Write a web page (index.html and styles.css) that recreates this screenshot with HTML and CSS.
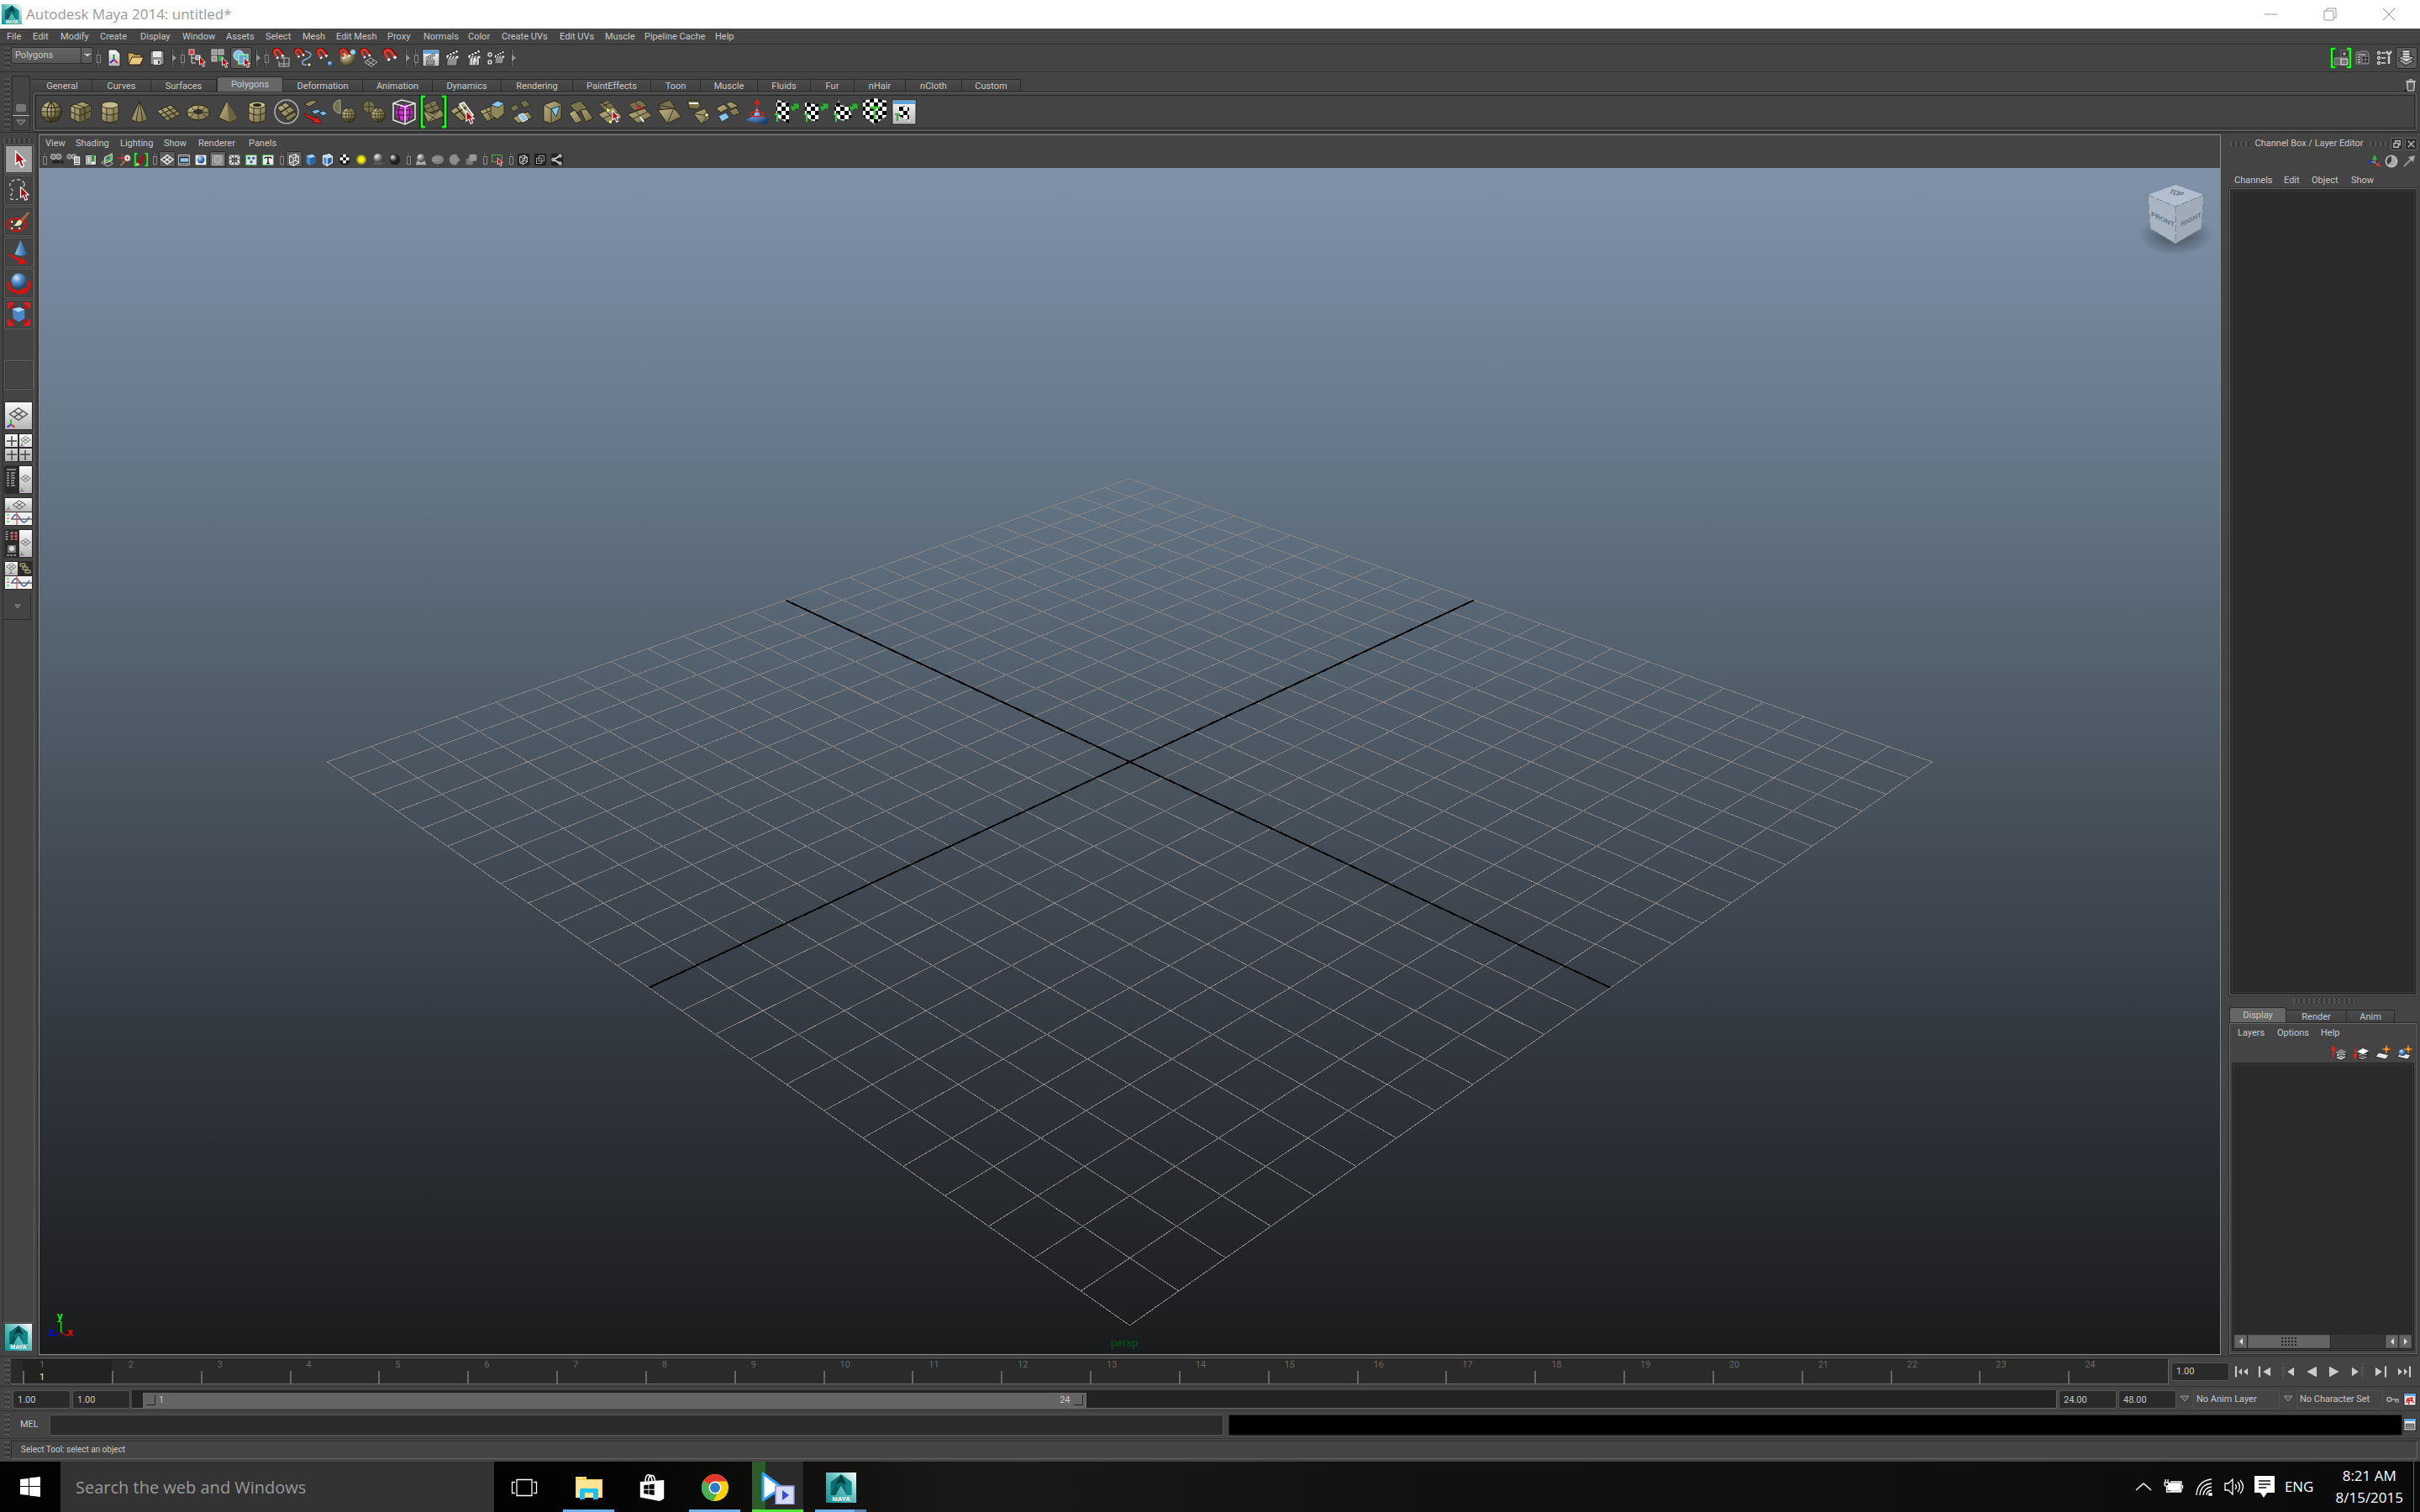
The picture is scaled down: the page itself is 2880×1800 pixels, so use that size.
FILE: index.html
```html
<!DOCTYPE html>
<html lang="en">
<head>
<meta charset="utf-8">
<title>Autodesk Maya 2014: untitled*</title>
<link rel="stylesheet" href="styles.css">
</head>
<body>
<svg class="defs" aria-hidden="true">
  <defs>
    <linearGradient id="tan" x1="0" y1="0" x2="1" y2="1"><stop offset="0" stop-color="#c2b78a"/><stop offset="1" stop-color="#6d6542"/></linearGradient>
    <radialGradient id="tanball" cx=".35" cy=".3" r=".75"><stop offset="0" stop-color="#d6cca0"/><stop offset=".5" stop-color="#8f865c"/><stop offset="1" stop-color="#2f2b18"/></radialGradient>
    <radialGradient id="blueball" cx=".35" cy=".3" r=".75"><stop offset="0" stop-color="#d8ecff"/><stop offset=".4" stop-color="#5b94d0"/><stop offset="1" stop-color="#173a66"/></radialGradient>
    <radialGradient id="greyball" cx=".35" cy=".3" r=".75"><stop offset="0" stop-color="#ececec"/><stop offset=".5" stop-color="#8a8a8a"/><stop offset="1" stop-color="#3a3a3a"/></radialGradient>
    <linearGradient id="cone" x1="0" x2="1" y1="0" y2="0"><stop offset="0" stop-color="#8cc4ee"/><stop offset="1" stop-color="#1d5490"/></linearGradient>
    <linearGradient id="grey" x1="0" y1="0" x2="0" y2="1"><stop offset="0" stop-color="#fafafa"/><stop offset="1" stop-color="#b4b4b4"/></linearGradient>
    <linearGradient id="mayabg" x1="0" y1="1" x2="1" y2="0"><stop offset="0" stop-color="#0f8f90"/><stop offset=".5" stop-color="#5cbcbb"/><stop offset="1" stop-color="#ffffff"/></linearGradient>
    <radialGradient id="glow"><stop offset="0" stop-color="#ffff20"/><stop offset=".5" stop-color="#e6e010"/><stop offset="1" stop-color="#e6e010" stop-opacity="0"/></radialGradient>
    <radialGradient id="shade"><stop offset="0" stop-color="#2a343e" stop-opacity=".7"/><stop offset="1" stop-color="#2a343e" stop-opacity="0"/></radialGradient>
    <pattern id="chk" width="10" height="10" patternUnits="userSpaceOnUse"><rect width="10" height="10" fill="#fff"/><rect width="5" height="5" fill="#000"/><rect x="5" y="5" width="5" height="5" fill="#000"/></pattern>
  </defs>

  <symbol id="maya" viewBox="0 0 32 32" overflow="visible"><rect width="32" height="32" fill="url(#mayabg)"/><path d="M16 2 27 10V24L22 24 16 14 10 24 5 24V10Z" fill="#0b6f70"/><path d="M16 2 20 13 22 24 27 24V10Z" fill="#118788"/><path d="M16 2 10 13 16 10 22 13Z" fill="#033a3d"/><path d="M10 13 5 24H10L13 18Z" fill="#0a5658"/><text x="16" y="30" text-anchor="middle" class="maya-word">MAYA</text></symbol>
  <symbol id="cur" viewBox="0 0 16 22"><path d="M2 1V17L6 14 9 21 12 19.500 9.500 13H14Z" fill="#b3060c" stroke="#fff" stroke-width="1.500"/></symbol>
  <symbol id="axes" viewBox="0 0 16 16"><path d="M8 10V2" stroke="#1db82a" stroke-width="2.500"/><path d="M8 10 2 14" stroke="#2038e0" stroke-width="2.500"/><path d="M8 10 14 14" stroke="#e02424" stroke-width="2.500"/></symbol>
  <symbol id="mesh" viewBox="0 0 32 24"><path d="M16 3 29 12 16 21 3 12ZM9.500 7.500 22.500 16.500M22.500 7.500 9.500 16.500" fill="none" stroke="#4a4a4a" stroke-width="1.600"/></symbol>

  <symbol id="i-new" viewBox="0 0 24 24"><path d="M6 2H15L20 7V22H6Z" fill="url(#grey)" stroke="#222"/><path d="M12.500 14V8" stroke="#1a9a22" stroke-width="2"/><path d="M12.500 14 8 18" stroke="#2038e0" stroke-width="2"/><path d="M12.500 14 17 18" stroke="#e02424" stroke-width="2"/></symbol>
  <symbol id="i-open" viewBox="0 0 24 24"><path d="M3 6H9L11 8H19V20H4Z" fill="#c9a65a" stroke="#2c2412"/><path d="M4 20 8 11H22L18 20Z" fill="#e9c982" stroke="#2c2412"/></symbol>
  <symbol id="i-save" viewBox="0 0 24 24"><path d="M4 4H19L20 5V20H4Z" fill="#8d8d8d" stroke="#222"/><rect x="7" y="4" width="10" height="7" fill="#e8e8e8"/><rect x="8" y="14" width="8" height="6" fill="#ddd"/><rect x="13" y="15" width="2" height="4" fill="#444"/></symbol>
  <symbol id="i-hier" viewBox="0 0 24 24"><rect x="2" y="2" width="6" height="6" fill="#d63a3a" stroke="#f2c0c0"/><path d="M5 8V18H10M5 12H10" stroke="#ddd" fill="none"/><rect x="10" y="9" width="5" height="5" fill="#999" stroke="#ddd"/><use href="#cur" x="13" y="10" width="10" height="13"/></symbol>
  <symbol id="i-comp" viewBox="0 0 24 24"><g fill="#999" stroke="#ddd" stroke-width=".8"><rect x="3" y="2" width="6" height="6"/><rect x="11" y="2" width="6" height="6"/><rect x="3" y="10" width="6" height="6"/></g><rect x="11" y="10" width="6" height="6" fill="#3fae4a"/><use href="#cur" x="14" y="11" width="10" height="13"/></symbol>
  <symbol id="i-obj" viewBox="0 0 24 24"><circle cx="9" cy="9" r="6" fill="#7fc2ee" stroke="#d8eeff"/><rect x="9" y="8" width="11" height="11" fill="#5fa8d8" stroke="#8ff0a0" stroke-width="1.500"/><use href="#cur" x="14" y="11" width="10" height="13"/></symbol>
  <symbol id="mag" viewBox="0 0 24 24"><path d="M4 8C2 2 8 0 12 4L17 11" fill="none" stroke="#6e1512" stroke-width="5.500"/><path d="M4.500 8C3 3 8 1 11.500 5L15 10" fill="none" stroke="#d8392c" stroke-width="3.500"/><path d="M5 8 8 13" stroke="#d8392c" stroke-width="3.500"/><path d="M8 13 9.500 15M15 10 17 12.500" stroke="#f2f2f2" stroke-width="3.500"/></symbol>
  <symbol id="i-mgrid" viewBox="0 0 24 24"><path d="M11 12H21V22H9V16M9 19H21M15 11V22" stroke="#bbb" fill="none"/><use href="#mag" width="20" height="20"/></symbol>
  <symbol id="i-mcurve" viewBox="0 0 24 24"><path d="M14 4C26 6 20 12 14 14 8 16 10 22 19 20" stroke="#7fb2e0" fill="none" stroke-width="1.500"/><use href="#mag" width="18" height="18"/><rect x="17" y="18" width="4" height="4" fill="#ffffb0" stroke="#222"/></symbol>
  <symbol id="i-mpoint" viewBox="0 0 24 24"><use href="#mag" width="20" height="20"/><circle cx="18" cy="19" r="3" fill="url(#blueball)"/></symbol>
  <symbol id="i-mproj" viewBox="0 0 24 24"><circle cx="13" cy="13" r="9" fill="url(#tanball)"/><use href="#mag" x="1" width="20" height="20"/><circle cx="19" cy="5" r="3" fill="#8fd0f8"/></symbol>
  <symbol id="i-mplane" viewBox="0 0 24 24"><path d="M14 12 22 17 15 22 7 17ZM10 15 18 20M18 15 11 20" stroke="#bbb" fill="none"/><use href="#mag" width="19" height="19"/></symbol>
  <symbol id="i-mlive" viewBox="0 0 24 24"><use href="#mag" x="1" width="24" height="24"/></symbol>
  <symbol id="clap" viewBox="0 0 24 24"><path d="M5 11H19L18 23H4Z" fill="#8f8f8f" stroke="#222"/><path d="M3 9 19 1 20 5 4 12Z" fill="#f0f0f0" stroke="#222"/><path d="M4 10H20V13H4Z" fill="#e4e4e4"/><path d="M6 7 9 10M10 5 13 8M14 3 17 6M8 10 6 13M12 10 10 13M16 10 14 13" stroke="#222" stroke-width="1.500"/></symbol>
  <symbol id="i-rwin" viewBox="0 0 24 24"><rect x="2" y="2" width="20" height="20" fill="url(#grey)" stroke="#222"/><rect x="3" y="3" width="18" height="4" fill="#5fa3df"/><use href="#clap" x="4" y="6" width="15" height="15"/></symbol>
  <symbol id="i-rend" viewBox="0 0 24 24"><use href="#clap" x="1" y="1" width="21" height="21"/></symbol>
  <symbol id="i-ipr" viewBox="0 0 24 24"><use href="#clap" x="1" y="1" width="21" height="21"/><path d="M8 13V20M11 20V13H13V16H11M16 20V13" stroke="#fff" fill="none" stroke-width="1.200"/></symbol>
  <symbol id="i-rset" viewBox="0 0 24 24"><use href="#clap" x="7" y="1" width="17" height="20"/><g fill="none" stroke="#ddd" stroke-width="1.500"><circle cx="4" cy="8" r="2"/><circle cx="4" cy="17" r="2"/></g></symbol>

  <symbol id="s-sphere" viewBox="0 0 32 32"><circle cx="16" cy="16" r="12.500" fill="url(#tanball)" stroke="#2b2714"/><path d="M4 16H28M6 10Q16 13 26 10M6 22Q16 25 26 22M16 4V28M16 4Q6 16 16 28M16 4Q26 16 16 28" fill="none" stroke="#332f1b" stroke-width="1.200"/></symbol>
  <symbol id="s-cube" viewBox="0 0 32 32"><path d="M4 9 18 4 28 8V22L15 29 4 24Z" fill="url(#tan)" stroke="#2b2714"/><path d="M15 13 28 8V22L15 29Z" fill="#6b6340"/><path d="M4 9 15 13 28 8M15 13V29M4 16 15 21 28 15M9 11V26M21 11V25M10 7 21 11" fill="none" stroke="#332f1b"/></symbol>
  <symbol id="s-cyl" viewBox="0 0 32 32"><path d="M6 8V25C8 30 24 30 26 25V8Z" fill="url(#tan)" stroke="#2b2714"/><ellipse cx="16" cy="8" rx="10" ry="4" fill="#c5bb90" stroke="#2b2714"/><path d="M6 17Q16 23 26 17M12 12V29M20 12V29" fill="none" stroke="#332f1b"/></symbol>
  <symbol id="s-cone" viewBox="0 0 32 32"><path d="M16 3 26 25Q16 32 6 25Z" fill="url(#tan)" stroke="#2b2714"/><path d="M16 3 12 28M16 3 20 28" stroke="#332f1b" fill="none"/></symbol>
  <symbol id="s-plane" viewBox="0 0 32 32"><path d="M2 15 18 8 30 19 14 27Z" fill="url(#tan)" stroke="#2b2714"/><path d="M6 19 22 12M10 23 26 15.500M7 13 19 25M13 10 25 21.500" stroke="#332f1b" stroke-width="1.200"/></symbol>
  <symbol id="s-torus" viewBox="0 0 32 32"><ellipse cx="16" cy="17" rx="13.500" ry="9" fill="url(#tan)" stroke="#2b2714"/><ellipse cx="16" cy="16" rx="5.500" ry="2.500" fill="#333" stroke="#2b2714"/><path d="M16 8V13M16 19V26M3 17H10M22 17H29M7 10 11 14M25 10 21 14M6 23 11 18M26 23 21 18" stroke="#332f1b"/></symbol>
  <symbol id="s-pyr" viewBox="0 0 32 32"><path d="M15 3 28 24 18 29 5 23Z" fill="url(#tan)" stroke="#2b2714"/><path d="M15 3 28 24 18 29Z" fill="#6b6340"/></symbol>
  <symbol id="s-pipe" viewBox="0 0 32 32"><use href="#s-cyl" width="32" height="32"/><ellipse cx="16" cy="8" rx="5" ry="2" fill="#2b2714"/></symbol>
  <symbol id="s-comb" viewBox="0 0 32 32"><circle cx="16" cy="16" r="14" fill="none" stroke="#b0b0b0" stroke-width="1.500"/><path d="M5 11 15 5 20 9 9 16ZM9 17 20 10 26 14 14 22ZM14 23 26 16 28 20 18 27Z" fill="url(#tan)" stroke="#2b2714"/><path d="M10 8 16 13M15 14 20 19" stroke="#332f1b"/></symbol>
  <symbol id="s-sep" viewBox="0 0 32 32"><path d="M2 7 12 2 18 4 8 10Z" fill="#8f865c" stroke="#2b2714"/><path d="M11 15 18 13 22 16 14 19ZM20 17 25 15 30 18 24 21Z" fill="#7fb8dc" stroke="#20394a"/><path d="M2 18 16 24 16 21 23 30 12 29 14 27 3 21Z" fill="#d42020" stroke="#5a0b0b" stroke-width=".8"/></symbol>
  <symbol id="s-bool" viewBox="0 0 32 32"><circle cx="9" cy="10" r="7" fill="#77704d" stroke="#3b3723"/><path d="M2 10H16M9 3V17" stroke="#3b3723"/><use href="#s-sphere" x="9" y="9" width="22" height="22"/></symbol>
  <symbol id="s-bool2" viewBox="0 0 32 32"><path d="M10 2A8 8 0 0 0 10 18Z" fill="#77704d" stroke="#aaa"/><use href="#s-sphere" x="9" y="9" width="22" height="22"/></symbol>
  <symbol id="s-cage" viewBox="0 0 32 32"><circle cx="16" cy="17" r="10" fill="#c832c8"/><path d="M7 14H25M7 20H25M16 7V27M11 8Q7 17 11 26M21 8Q25 17 21 26" stroke="#3c0a3e" fill="none" stroke-width="1.200"/><path d="M3 6 13 2 29 6V25L17 31 3 26ZM3 6 17 10 29 6M17 10V31" fill="none" stroke="#e8e8e8" stroke-width="1.500"/></symbol>
  <symbol id="s-tri" viewBox="0 0 32 32"><path d="M3 8 18 1 24 13 8 18Z" fill="#7a7352" stroke="#332f1b"/><path d="M2 14 9 30 31 21 24 13 15 19Z" fill="url(#tan)" stroke="#2b2714"/><path d="M11 5 17 15M6 13 21 7M2 14 19 26M24 13 9 30" stroke="#332f1b"/></symbol>
  <symbol id="s-brk" viewBox="0 0 34 40"><use href="#s-tri" x="2" y="4" width="30" height="32"/><path d="M7 2H3V38H7M27 2H31V38H27" fill="none" stroke="#000" stroke-width="5"/><path d="M7 2H3V38H7M27 2H31V38H27" fill="none" stroke="#18ff18" stroke-width="3"/></symbol>
  <symbol id="s-sel" viewBox="0 0 32 32"><path d="M1 15 16 5 31 20 14 27Z" fill="url(#tan)" stroke="#2b2714"/><path d="M6 19 21 10M8 10 20 24" stroke="#332f1b" stroke-width="1.500"/><path d="M12 7 17 5 28 20 23 23Z" fill="none" stroke="#fff" stroke-width="1.500"/><use href="#cur" x="18" y="14" width="13" height="17"/></symbol>
  <symbol id="s-ext" viewBox="0 0 32 32"><path d="M1 15 14 10 20 22 10 28Z" fill="url(#tan)" stroke="#2b2714"/><path d="M4 19 16 14M8 12 15 25" stroke="#332f1b"/><path d="M14 9V20L22 25 30 18V6Z" fill="#8f865c" stroke="#2b2714"/><path d="M14 8 22 3 30 6 23 11Z" fill="#8cc6ea" stroke="#20394a"/></symbol>
  <symbol id="s-bri" viewBox="0 0 32 32"><path d="M2 11 9 7 13 12 6 16ZM14 5 20 2 26 8 19 11Z" fill="#77704d" stroke="#332f1b"/><path d="M5 23 23 16 29 23 12 30Z" fill="url(#tan)" stroke="#2b2714"/><path d="M12 20 18 18 23 25 17 28Z" fill="#8cc6ea" stroke="#fff"/></symbol>
  <symbol id="s-bev" viewBox="0 0 32 32"><path d="M7 8 20 3 28 7V24L16 30 7 27Z" fill="url(#tan)" stroke="#2b2714"/><path d="M16 13 26 9 22 22Z" fill="#8cc6ea" stroke="#20394a"/><path d="M7 8 16 13V30" fill="none" stroke="#332f1b"/></symbol>
  <symbol id="s-mrg" viewBox="0 0 32 32"><path d="M3 8 15 3 24 12 11 17Z" fill="#7a7352" stroke="#332f1b"/><path d="M2 18 9 14 18 27 10 30ZM16 14 23 13 31 24 22 28Z" fill="url(#tan)" stroke="#2b2714"/></symbol>
  <symbol id="s-spl" viewBox="0 0 32 32"><path d="M3 7 13 2 22 10 10 15Z" fill="#7a7352" stroke="#332f1b"/><path d="M2 19 20 10 31 22 14 30Z" fill="url(#tan)" stroke="#2b2714"/><path d="M6 5 16 13M8 9 18 5M8 24 26 16M11 15 23 27" stroke="#332f1b"/><path d="M12 14H15M15 28H18" stroke="#ffff70" stroke-width="3"/><use href="#cur" x="17" y="14" width="12" height="15"/></symbol>
  <symbol id="s-cut" viewBox="0 0 32 32"><path d="M3 7 17 2 25 9 10 15Z" fill="#7a7352" stroke="#332f1b"/><path d="M2 19 22 12 31 21 14 30Z" fill="url(#tan)" stroke="#2b2714"/><path d="M7 25 26 16M10 4 18 12M12 16 23 27" stroke="#332f1b"/><path d="M12 8 16 14M16 8 20 14" stroke="#d42020" stroke-width="1.500"/><path d="M17 22 21 28" stroke="#fff" stroke-width="2"/></symbol>
  <symbol id="s-flip" viewBox="0 0 32 32"><path d="M3 8 17 2 24 12 8 14Z" fill="#7a7352" stroke="#332f1b"/><path d="M3 14 22 12 31 22 14 30Z" fill="url(#tan)" stroke="#2b2714"/><path d="M22 12 14 30M3 8 24 12" stroke="#332f1b"/></symbol>
  <symbol id="s-fill" viewBox="0 0 32 32"><path d="M3 3H16L19 9 15 13 5 12Z" fill="#77704d" stroke="#2b2714"/><path d="M5 6H16" stroke="#eee" stroke-width="2"/><path d="M10 18 24 12 30 24 20 31Z" fill="url(#tan)" stroke="#2b2714"/><path d="M10 18 27 21M27 21 20 31" stroke="#332f1b"/><rect x="24" y="18" width="4" height="4" fill="#ffff90" stroke="#444"/></symbol>
  <symbol id="s-tile" viewBox="0 0 32 32"><path d="M2 12 11 7 17 12 8 17ZM14 6 20 4 29 9 20 13ZM18 15 26 11 31 18 23 21Z" fill="url(#tan)" stroke="#2b2714"/><path d="M5 21 14 17 18 23 9 28Z" fill="#8cc6ea" stroke="#20394a"/></symbol>
  <symbol id="s-scu" viewBox="0 0 32 32"><path d="M2 26 12 21 16 10 20 21 30 24 27 31 14 29Z" fill="url(#blueball)"/><ellipse cx="16" cy="19" rx="8" ry="3" fill="none" stroke="#d42020" stroke-width="1.500"/><path d="M16 14V4M13 7 16 1 19 7Z" stroke="#d42020" fill="#d42020"/></symbol>
  <symbol id="uvt" viewBox="0 0 32 32"><path d="M20 9 25 9 23 6 31 6 31 14 28 12 23 16Z" fill="#35a83a" stroke="#12501a" stroke-width=".7"/><path d="M2 19H8M5 19V28" stroke="#43c94a" stroke-width="2"/></symbol>
  <symbol id="s-uv1" viewBox="0 0 32 32"><path d="M4 2 19 5V30L4 22Z" fill="url(#chk)"/><use href="#uvt" width="32" height="32"/></symbol>
  <symbol id="s-uv2" viewBox="0 0 32 32"><path d="M3 3Q10 8 19 7V26Q9 30 3 18Z" fill="url(#chk)"/><use href="#uvt" width="32" height="32"/></symbol>
  <symbol id="s-uv3" viewBox="0 0 32 32"><path d="M9 2Q6 10 20 9L24 22Q15 30 7 24-2 14 9 2Z" fill="url(#chk)"/><use href="#uvt" width="32" height="32"/></symbol>
  <symbol id="s-uv4" viewBox="0 0 32 32"><path d="M2 3 16 0 30 3V21L16 31 2 21Z" fill="url(#chk)"/><path d="M10 11H22M16 11V25" stroke="#43c94a" stroke-width="3"/></symbol>
  <symbol id="s-uv5" viewBox="0 0 32 32"><rect x="2" y="2" width="28" height="29" fill="url(#grey)" stroke="#222"/><rect x="3" y="3" width="26" height="4" fill="#5fa3df"/><path d="M10 8 22 11V27L10 21Z" fill="url(#chk)"/><path d="M5 19H11M8 19V27" stroke="#35a83a" stroke-width="2"/></symbol>

  <symbol id="p-cam" viewBox="0 0 20 20"><circle cx="5" cy="6" r="3.500" fill="#777" stroke="#ccc"/><circle cx="12" cy="6" r="3.500" fill="#777" stroke="#ccc"/><path d="M4 11H13V15H4Z" fill="#222"/><path d="M12 13 18 10V16Z" fill="#222"/></symbol>
  <symbol id="p-cam2" viewBox="0 0 20 20"><circle cx="4" cy="6" r="3" fill="#777" stroke="#ccc"/><circle cx="10" cy="6" r="3" fill="#777" stroke="#ccc"/><rect x="10" y="6" width="8" height="11" fill="#eee"/><path d="M11 9H17M11 12H17M11 15H17" stroke="#333"/></symbol>
  <symbol id="p-book" viewBox="0 0 20 20"><rect x="3" y="4" width="14" height="13" fill="#eee" stroke="#222"/><rect x="5" y="6" width="5" height="9" fill="#ccc" stroke="#888"/><path d="M11 3H15V14L13 12 11 14Z" fill="#26913a"/></symbol>
  <symbol id="p-img" viewBox="0 0 20 20"><path d="M2 14 9 10 17 15 10 19Z" fill="none" stroke="#ccc"/><path d="M6 7 16 2V11L6 15Z" fill="#6ab04c" stroke="#ddd"/><path d="M8 9 12 5 13 10Z" fill="#2f54d0"/></symbol>
  <symbol id="p-pan" viewBox="0 0 20 20"><path d="M7 2V14M1 8H13" stroke="#e03030" stroke-width="2" stroke-dasharray="2 1"/><circle cx="14" cy="8" r="4" fill="#eee" stroke="#999"/><path d="M12 8H16M14 6V10" stroke="#d02020"/><path d="M11 12 5 18" stroke="#b07840" stroke-width="2"/></symbol>
  <symbol id="p-pen" viewBox="0 0 20 20"><path d="M4 14 12 3 17 6 9 17Z" fill="#8a1f1c"/><path d="M4 14 9 17 3 18Z" fill="#e8c9a0"/><path d="M5 2H2V18H5M15 2H18V18H15" fill="none" stroke="#18ff18" stroke-width="2"/></symbol>
  <symbol id="p-grid" viewBox="0 0 20 20"><path d="M10 4 18 10 10 16 2 10ZM6 7 14 13M14 7 6 13" fill="none" stroke="#eee" stroke-width="1.500"/></symbol>
  <symbol id="p-film" viewBox="0 0 20 20"><rect x="3" y="4" width="14" height="13" fill="#111" stroke="#eee"/><path d="M4 6H17M4 15H17" stroke="#eee" stroke-width="1.500" stroke-dasharray="1.500 1"/><path d="M5 8H16V13H5Z" fill="#8cc6ea"/></symbol>
  <symbol id="p-ball" viewBox="0 0 20 20"><rect x="3" y="4" width="14" height="13" fill="#eee"/><circle cx="10" cy="10" r="5" fill="url(#blueball)"/></symbol>
  <symbol id="p-gate" viewBox="0 0 20 20"><rect x="3" y="4" width="14" height="13" fill="#8c8c8c" stroke="#aaa"/><circle cx="10" cy="10" r="4.500" fill="#999" stroke="#ccc"/></symbol>
  <symbol id="p-field" viewBox="0 0 20 20"><rect x="3" y="4" width="14" height="13" fill="#ddd"/><path d="M3 4 17 17M17 4 3 17M3 10H17M10 4V17" stroke="#333"/><rect x="7" y="8" width="6" height="5" fill="none" stroke="#333"/></symbol>
  <symbol id="p-safe" viewBox="0 0 20 20"><rect x="3" y="4" width="14" height="13" fill="#e4e4e4" stroke="#3fae4a"/><circle cx="7" cy="8" r="2" fill="#35689c"/><circle cx="13" cy="8" r="2" fill="#35689c"/><circle cx="10" cy="13" r="2" fill="#35689c"/></symbol>
  <symbol id="p-text" viewBox="0 0 20 20"><rect x="3" y="4" width="14" height="13" fill="#eee" stroke="#3fae4a"/><path d="M6 7H14V9M6 9V7M10 7V15M8 15H12" stroke="#111" stroke-width="1.500" fill="none"/></symbol>
  <symbol id="p-wire" viewBox="0 0 20 20"><path d="M4 5 12 3 16 6V14L9 18 4 15ZM4 5 9 8 16 6M9 8V18M12 3V11L4 15M12 11 16 14" fill="none" stroke="#ddd" stroke-width="1.300"/></symbol>
  <symbol id="p-solid" viewBox="0 0 20 20"><path d="M4 5 12 3 16 6V14L9 18 4 15Z" fill="#4a86c8"/><path d="M4 5 12 3 16 6 9 8Z" fill="#a8d4f4"/><path d="M9 8 16 6V14L9 18Z" fill="#2d64a4"/></symbol>
  <symbol id="p-wos" viewBox="0 0 20 20"><use href="#p-solid" width="20" height="20"/><path d="M4 5 12 3 16 6V14L9 18 4 15ZM4 5 9 8 16 6M9 8V18" fill="none" stroke="#eaf4ff" stroke-width="1.300"/></symbol>
  <symbol id="p-tex" viewBox="0 0 20 20"><circle cx="10" cy="10" r="7" fill="#111"/><path d="M8 3H12V7H8ZM4 7H8V11H4ZM12 7H16V11H12ZM8 11H12V15H8Z" fill="#fff"/></symbol>
  <symbol id="p-light" viewBox="0 0 20 20"><circle cx="10" cy="10" r="7.500" fill="url(#glow)"/></symbol>
  <symbol id="p-shad" viewBox="0 0 20 20"><ellipse cx="10" cy="15" rx="7" ry="2" fill="#5a5a5a"/><circle cx="10" cy="8" r="6" fill="url(#greyball)"/></symbol>
  <symbol id="p-dark" viewBox="0 0 20 20"><circle cx="10" cy="10" r="7" fill="#222"/><circle cx="8" cy="8" r="4" fill="url(#greyball)"/></symbol>
  <symbol id="p-ao" viewBox="0 0 20 20"><path d="M3 17 5 11H15L17 17Z" fill="#aaa"/><circle cx="10" cy="8" r="5.500" fill="url(#greyball)"/></symbol>
  <symbol id="p-blur" viewBox="0 0 20 20"><ellipse cx="10" cy="10" rx="8" ry="6" fill="#808080"/><path d="M3 8H14M2 11H12" stroke="#aaa"/></symbol>
  <symbol id="p-aa" viewBox="0 0 20 20"><path d="M10 3A7 7 0 0 0 10 17ZM10 3H13V6H15V9H17V12H15V14H13V17H10Z" fill="#8c8c8c"/></symbol>
  <symbol id="p-dof" viewBox="0 0 20 20"><rect x="3" y="8" width="9" height="9" rx="2" fill="#777"/><rect x="7" y="3" width="10" height="9" rx="2" fill="#999"/></symbol>
  <symbol id="p-iso" viewBox="0 0 20 20"><rect x="3" y="4" width="13" height="9" fill="none" stroke="#4dff4d" stroke-dasharray="2 1"/><use href="#cur" x="9" y="7" width="9" height="12"/></symbol>
  <symbol id="p-xray" viewBox="0 0 20 20"><rect x="2" y="2" width="16" height="16" rx="2" fill="#222"/><use href="#p-wire" x="2" y="2" width="16" height="16"/></symbol>
  <symbol id="p-two" viewBox="0 0 20 20"><rect x="2" y="2" width="16" height="16" rx="2" fill="#222"/><path d="M5 8H12V15H5ZM8 5H15V12H8Z" fill="none" stroke="#aaa"/></symbol>
  <symbol id="p-jnt" viewBox="0 0 20 20"><rect x="2" y="2" width="16" height="16" rx="2" fill="#222"/><path d="M5 10 14 5M5 10 14 15" stroke="#ddd" stroke-width="2"/><g fill="#999" stroke="#ddd"><circle cx="5" cy="10" r="2"/><circle cx="14" cy="5" r="2"/><circle cx="14" cy="15" r="2"/></g></symbol>

  <symbol id="t-sel" viewBox="0 0 34 34"><use href="#cur" x="10" y="6" width="18" height="22"/></symbol>
  <symbol id="t-lasso" viewBox="0 0 34 34"><path d="M8 6C14 2 22 4 24 9M24 9 22 16M6 8C5 14 9 16 10 18 8 22 4 27 8 28H16" fill="none" stroke="#bbb" stroke-width="1.500" stroke-dasharray="4 3"/><use href="#cur" x="17" y="12" width="14" height="18"/></symbol>
  <symbol id="t-paint" viewBox="0 0 34 34"><ellipse cx="14" cy="21" rx="11" ry="7.500" fill="none" stroke="#d01414" stroke-width="2.500"/><path d="M18 16 28 5 30 7 21 18Z" fill="#a8683c"/><path d="M10 22C14 22 14 16 18 15L21 18C20 22 15 24 10 22Z" fill="#efe3c0"/><g fill="#ffffc0" stroke="#333" stroke-width=".7"><rect x="7" y="16" width="3" height="3"/><rect x="7" y="24" width="3" height="3"/><rect x="16" y="24" width="3" height="3"/></g></symbol>
  <symbol id="t-move" viewBox="0 0 34 34"><path d="M19 2 27 19Q20 23 12 19Z" fill="url(#cone)"/><path d="M4 18 20 26 21 23 27 31 15 31 18 28 5 21Z" fill="#e0120f"/></symbol>
  <symbol id="t-rot" viewBox="0 0 34 34"><path d="M5 15Q2 26 17 28M28 14Q34 23 22 27" fill="none" stroke="#d01414" stroke-width="4"/><path d="M13 29 24 22V30Z" fill="#e0120f"/><circle cx="17" cy="14" r="9.500" fill="url(#blueball)"/></symbol>
  <symbol id="t-scale" viewBox="0 0 34 34"><path d="M5 4 28 29M29 4 5 29" stroke="#c01010" stroke-width="3"/><path d="M3 2H12L3 11ZM31 2V11L22 2ZM3 31V22L12 31ZM31 31H22L31 22Z" fill="#e8181a"/><path d="M9 10 18 8 24 11V22L17 26 10 22Z" fill="#4a86c8"/><path d="M9 10 18 8 24 11 16 14Z" fill="#a8d4f4"/></symbol>

  <symbol id="l-one" viewBox="0 0 34 34"><rect x="1" y="1" width="32" height="32" fill="url(#grey)"/><use href="#mesh" x="4" y="5" width="26" height="20"/><use href="#axes" x="2" y="20" width="12" height="12"/></symbol>
  <symbol id="l-four" viewBox="0 0 34 34"><path d="M1 1H16V16H1ZM18 1H33V16H18ZM1 18H16V33H1ZM18 18H33V33H18Z" fill="url(#grey)"/><path d="M3 9H15M9 3V15M3 25H15M9 20V32M19 25H31M25 20V32" stroke="#444" stroke-width="1.500"/><use href="#mesh" x="18" y="2" width="15" height="11"/><use href="#axes" x="18" y="10" width="6" height="6"/></symbol>
  <symbol id="l-out" viewBox="0 0 34 34"><rect x="1" y="1" width="16" height="32" fill="#2b2b2b"/><path d="M3 5H14M3 9H6M8 9H13M3 12H6M8 12H12M3 15H6M8 15H13M3 18H6M8 18H12M3 21H6M8 21H12M3 24H6M8 24H13" stroke="#ddd"/><rect x="18" y="1" width="15" height="32" fill="url(#grey)"/><use href="#mesh" x="18" y="10" width="15" height="11"/><use href="#axes" x="18" y="26" width="6" height="6"/></symbol>
  <symbol id="wave" viewBox="0 0 34 16"><rect x="1" y="0" width="32" height="15" fill="#eee"/><path d="M3 3H6M3 11H6" stroke="#3a3"/><path d="M3 7H6" stroke="#c33"/><path d="M8 8H33" stroke="#222"/><path d="M9 8C13 0 16 2 20 9 23 14 26 12 30 5" fill="none" stroke="#3c6288" stroke-width="1.500"/><path d="M15 0V15" stroke="#e03030"/></symbol>
  <symbol id="l-graph" viewBox="0 0 34 34"><rect x="1" y="1" width="32" height="16" fill="url(#grey)"/><use href="#mesh" x="5" y="2" width="26" height="14"/><use href="#axes" x="2" y="10" width="6" height="6"/><use href="#wave" y="18" width="34" height="16"/></symbol>
  <symbol id="l-hyper" viewBox="0 0 34 34"><rect x="1" y="1" width="16" height="32" fill="#2b2b2b"/><path d="M3 2V14" stroke="#888" stroke-width="3" stroke-dasharray="2 1"/><path d="M9 3V13M14 3V13" stroke="#c66" stroke-width="3" stroke-dasharray="3 1"/><rect x="4" y="19" width="10" height="9" fill="#777"/><circle cx="9" cy="23" r="3" fill="#ddd"/><path d="M3 31H15" stroke="#ddd" stroke-dasharray="3 1"/><rect x="18" y="1" width="15" height="32" fill="url(#grey)"/><use href="#mesh" x="18" y="10" width="15" height="11"/><use href="#axes" x="18" y="26" width="6" height="6"/></symbol>
  <symbol id="l-hg" viewBox="0 0 34 34"><rect x="1" y="1" width="15" height="16" fill="url(#grey)"/><use href="#mesh" x="1" y="1" width="15" height="11"/><use href="#axes" x="5" y="10" width="6" height="6"/><rect x="17" y="1" width="16" height="16" fill="#2b2b2b"/><path d="M19 3H25V6H19ZM22 7H28V10H22ZM25 11H31V14H25Z" fill="none" stroke="#c9c48a"/><use href="#wave" y="18" width="34" height="16"/></symbol>

  <symbol id="c-mtk" viewBox="0 0 26 26"><path d="M6 2H2V24H6M20 2H24V24H20" fill="none" stroke="#000" stroke-width="5"/><path d="M6 2H2V24H6M20 2H24V24H20" fill="none" stroke="#18ff18" stroke-width="3"/><path d="M5 13H13V21H5Z" fill="#666" stroke="#999"/><path d="M13 14H21V21H13Z" fill="#777" stroke="#eee"/><rect x="13" y="4" width="9" height="8" fill="#333" stroke="#777"/><circle cx="17" cy="8" r="2" fill="#999"/></symbol>
  <symbol id="c-attr" viewBox="0 0 26 26"><path d="M5 6H10V5H17L20 7V20H5Z" fill="#555" stroke="#888"/><path d="M7 9H16M7 12H10M7 15H10M7 18H10" stroke="#ddd"/><path d="M12 11H20V19H12ZM12 15H20M16 11V19" fill="#222" stroke="#888"/></symbol>
  <symbol id="c-tool" viewBox="0 0 26 26"><g fill="none" stroke="#ddd" stroke-width="1.300"><circle cx="6" cy="7" r="1.500"/><circle cx="6" cy="13" r="1.500"/><circle cx="6" cy="19" r="1.500"/><path d="M9 7H14M9 13H14M9 19H14"/></g><path d="M18 20V11M15 5 18 9 21 5" stroke="#ccc" stroke-width="2.500" fill="none"/></symbol>
  <symbol id="c-chan" viewBox="0 0 26 26"><path d="M3 16 13 12 22 17 12 22Z" fill="#999" stroke="#222"/><path d="M4 13 9 10 22 12 13 18Z" fill="#ddd" stroke="#222"/><path d="M8 4H17V13H8ZM5 7H19M6 10H20" fill="#eee" stroke="#333"/></symbol>
  <symbol id="trash" viewBox="0 0 16 18"><path d="M0 14H5V17H0Z" fill="#222"/><path d="M3 5H13L12 16H4Z" fill="#888" stroke="#ccc"/><path d="M6 6V15M8 6V15M10 6V15" stroke="#222"/><path d="M2 4H14M6 2H10" stroke="#ccc" stroke-width="1.500"/></symbol>
  <symbol id="m-manip" viewBox="0 0 16 16"><path d="M9 9V4M9 9H4M9 9 13 13" stroke="#aaa"/><path d="M6 6 9 0 12 6Z" fill="#2fb53a"/><path d="M5 6V12L0 9Z" fill="#2036c8"/><path d="M10 13 14 9 16 15Z" fill="#e03030"/></symbol>
  <symbol id="m-clock" viewBox="0 0 16 16"><circle cx="8" cy="8" r="6.500" fill="#a8a8a8" stroke="#bbb" stroke-width="2"/><path d="M8 8V2A6 6 0 0 0 4 12Z" fill="#3c3c3c"/></symbol>
  <symbol id="m-arrow" viewBox="0 0 16 16"><path d="M2 14 11 5" stroke="#999" stroke-width="2"/><path d="M7 3 15 1 13 9Z" fill="#aaa"/></symbol>
  <symbol id="y-up" viewBox="0 0 20 18"><path d="M5 9 12 5 19 8 12 12ZM5 12 12 9 19 11 12 15ZM5 15 12 12 19 14 12 18Z" fill="#ddd" stroke="#333"/><path d="M5 9 12 5 19 8 12 12Z" fill="#888"/><path d="M3 15V5" stroke="#e02020" stroke-width="1.500"/><path d="M0 7 3 0 6 7Z" fill="#e02020"/></symbol>
  <symbol id="y-dn" viewBox="0 0 20 18"><path d="M5 15 12 12 19 14 12 18ZM5 12 12 9 19 11 12 15ZM5 8 12 4 19 7 12 11Z" fill="#999" stroke="#222"/><path d="M5 8 12 4 19 7 12 11Z" fill="#fff"/><path d="M3 3V13" stroke="#e02020" stroke-width="1.500"/><path d="M0 11 3 18 6 11Z" fill="#e02020"/></symbol>
  <symbol id="y-new" viewBox="0 0 20 18"><path d="M1 14 5 9 17 12 13 17Z" fill="#e8e8e8" stroke="#333"/><path d="M14 0 15 4 19 5 15 6 14 10 13 6 9 5 13 4Z" fill="#ffb030" stroke="#e06a10" stroke-width=".8"/></symbol>
  <symbol id="y-obj" viewBox="0 0 20 18"><use href="#y-new" width="20" height="18"/><circle cx="7" cy="9" r="4" fill="url(#blueball)"/></symbol>
  <symbol id="b-win" viewBox="0 0 16 16"><rect x="1" y="1" width="14" height="14" fill="#e8e8e8" stroke="#222"/><rect x="1" y="1" width="14" height="3" fill="#5fa3df"/><path d="M3 7H13V9H3ZM3 10H13V13H3Z" fill="#999" stroke="#333" stroke-width=".7"/></symbol>
  <symbol id="b-pref" viewBox="0 0 16 16"><rect x="1" y="1" width="14" height="14" fill="#eee" stroke="#222"/><rect x="1" y="1" width="14" height="3" fill="#5fa3df"/><path d="M3 12 7 9 5 7 11 6 9 9 13 12M8 9 6 14M3 9H12" stroke="#d03030" fill="none" stroke-width="1.500"/></symbol>
  <symbol id="b-key" viewBox="0 0 16 12"><circle cx="3.500" cy="6" r="2.500" fill="none" stroke="#aaa" stroke-width="1.500"/><path d="M6 6H15M11 6V10M14 6V10" stroke="#aaa" stroke-width="1.500"/></symbol>
</svg>

<div class="app">
  <header class="title">
    <svg class="logo24"><use href="#maya"/></svg>
    <h1>Autodesk Maya 2014: untitled*</h1>
    <div class="winbtns">
      <button aria-label="Minimize"><svg viewBox="0 0 16 16"><path d="M0 8H15"/></svg></button>
      <button aria-label="Restore"><svg viewBox="0 0 16 16"><path d="M1 4H12V15H1ZM4 4V1H15V12H12"/></svg></button>
      <button aria-label="Close"><svg viewBox="0 0 16 16"><path d="M1 1 15 15M15 1 1 15"/></svg></button>
    </div>
  </header>

  <nav class="menubar main-menu">
    <button>File</button><button>Edit</button><button>Modify</button><button>Create</button><button>Display</button><button>Window</button><button>Assets</button><button>Select</button><button>Mesh</button><button>Edit Mesh</button><button>Proxy</button><button>Normals</button><button>Color</button><button>Create UVs</button><button>Edit UVs</button><button>Muscle</button><button>Pipeline Cache</button><button>Help</button>
  </nav>

  <div class="status">
    <i class="grip"></i>
    <select class="mode" aria-label="Menu set"><option>Polygons</option></select>
    <i class="sep"></i>
    <button class="tb" aria-label="New scene"><svg><use href="#i-new"/></svg></button><button class="tb" aria-label="Open scene"><svg><use href="#i-open"/></svg></button><button class="tb" aria-label="Save scene"><svg><use href="#i-save"/></svg></button>
    <i class="sep fold"></i><i class="sep"></i>
    <button class="tb" aria-label="Select by hierarchy"><svg><use href="#i-hier"/></svg></button><button class="tb" aria-label="Select by component"><svg><use href="#i-comp"/></svg></button><button class="tb on" aria-label="Select by object"><svg><use href="#i-obj"/></svg></button>
    <i class="sep fold"></i><i class="sep"></i>
    <button class="tb" aria-label="Snap to grids"><svg><use href="#i-mgrid"/></svg></button><button class="tb" aria-label="Snap to curves"><svg><use href="#i-mcurve"/></svg></button><button class="tb" aria-label="Snap to points"><svg><use href="#i-mpoint"/></svg></button><button class="tb" aria-label="Snap to projected center"><svg><use href="#i-mproj"/></svg></button><button class="tb" aria-label="Snap to view planes"><svg><use href="#i-mplane"/></svg></button><button class="tb" aria-label="Make live"><svg><use href="#i-mlive"/></svg></button>
    <i class="sep fold"></i><i class="sep"></i>
    <button class="tb" aria-label="Render view"><svg><use href="#i-rwin"/></svg></button><button class="tb" aria-label="Render frame"><svg><use href="#i-rend"/></svg></button><button class="tb" aria-label="IPR render"><svg><use href="#i-ipr"/></svg></button><button class="tb" aria-label="Render settings"><svg><use href="#i-rset"/></svg></button>
    <i class="sep fold"></i>
    <span class="push"></span>
    <button class="tb big" aria-label="Modeling toolkit"><svg><use href="#c-mtk"/></svg></button><button class="tb big" aria-label="Attribute editor"><svg><use href="#c-attr"/></svg></button><button class="tb big" aria-label="Tool settings"><svg><use href="#c-tool"/></svg></button><button class="tb big on" aria-label="Channel box"><svg><use href="#c-chan"/></svg></button>
  </div>

  <section class="shelf">
    <i class="grip"></i>
    <div class="shelf-side"><b></b><hr><svg viewBox="0 0 12 8"><path d="M1 1H11L6 7Z"/></svg></div>
    <div class="shelf-main">
      <div class="tabs shelf-tabs">
        <button>General</button><button>Curves</button><button>Surfaces</button><button class="act">Polygons</button><button>Deformation</button><button>Animation</button><button>Dynamics</button><button>Rendering</button><button>PaintEffects</button><button>Toon</button><button>Muscle</button><button>Fluids</button><button>Fur</button><button>nHair</button><button>nCloth</button><button>Custom</button>
        <svg class="trash"><use href="#trash"/></svg>
      </div>
      <div class="shelf-box">
        <button aria-label="Sphere"><svg><use href="#s-sphere"/></svg></button><button aria-label="Cube"><svg><use href="#s-cube"/></svg></button><button aria-label="Cylinder"><svg><use href="#s-cyl"/></svg></button><button aria-label="Cone"><svg><use href="#s-cone"/></svg></button><button aria-label="Plane"><svg><use href="#s-plane"/></svg></button><button aria-label="Torus"><svg><use href="#s-torus"/></svg></button><button aria-label="Pyramid"><svg><use href="#s-pyr"/></svg></button><button aria-label="Pipe"><svg><use href="#s-pipe"/></svg></button><button aria-label="Combine"><svg><use href="#s-comb"/></svg></button><button aria-label="Separate"><svg><use href="#s-sep"/></svg></button><button aria-label="Mirror"><svg><use href="#s-bool2"/></svg></button><button aria-label="Boolean"><svg><use href="#s-bool"/></svg></button><button aria-label="Smooth proxy"><svg><use href="#s-cage"/></svg></button><button class="tall" aria-label="Quad draw"><svg><use href="#s-brk"/></svg></button><button aria-label="Select faces"><svg><use href="#s-sel"/></svg></button><button aria-label="Extrude"><svg><use href="#s-ext"/></svg></button><button aria-label="Bridge"><svg><use href="#s-bri"/></svg></button><button aria-label="Bevel"><svg><use href="#s-bev"/></svg></button><button aria-label="Merge"><svg><use href="#s-mrg"/></svg></button><button aria-label="Split polygon"><svg><use href="#s-spl"/></svg></button><button aria-label="Edge loop"><svg><use href="#s-cut"/></svg></button><button aria-label="Flip edge"><svg><use href="#s-flip"/></svg></button><button aria-label="Fill hole"><svg><use href="#s-fill"/></svg></button><button aria-label="Poke face"><svg><use href="#s-tile"/></svg></button><button aria-label="Sculpt"><svg><use href="#s-scu"/></svg></button><button aria-label="Planar mapping"><svg><use href="#s-uv1"/></svg></button><button aria-label="Cylindrical mapping"><svg><use href="#s-uv2"/></svg></button><button aria-label="Spherical mapping"><svg><use href="#s-uv3"/></svg></button><button aria-label="Automatic mapping"><svg><use href="#s-uv4"/></svg></button><button aria-label="UV editor"><svg><use href="#s-uv5"/></svg></button>
      </div>
    </div>
  </section>

  <main class="work">
    <aside class="toolbox">
      <i class="hgrip"></i>
      <div class="tools">
        <button class="on" aria-label="Select tool"><svg><use href="#t-sel"/></svg></button><button aria-label="Lasso tool"><svg><use href="#t-lasso"/></svg></button><button aria-label="Paint selection tool"><svg><use href="#t-paint"/></svg></button><button aria-label="Move tool"><svg><use href="#t-move"/></svg></button><button aria-label="Rotate tool"><svg><use href="#t-rot"/></svg></button><button aria-label="Scale tool"><svg><use href="#t-scale"/></svg></button><span></span><button aria-label="Last tool"></button>
      </div>
      <div class="layouts">
        <button aria-label="Single view"><svg><use href="#l-one"/></svg></button><button aria-label="Four view"><svg><use href="#l-four"/></svg></button><button aria-label="Outliner and view"><svg><use href="#l-out"/></svg></button><button aria-label="Graph and view"><svg><use href="#l-graph"/></svg></button><button aria-label="Hypershade and view"><svg><use href="#l-hyper"/></svg></button><button aria-label="Hypergraph and view"><svg><use href="#l-hg"/></svg></button>
        <button class="more" aria-label="More layouts"><svg viewBox="0 0 10 8"><path d="M2 2H8L5 6Z"/></svg></button>
      </div>
      <svg class="logo32"><use href="#maya"/></svg>
    </aside>

    <section class="panel">
      <nav class="menubar panel-menu"><button>View</button><button>Shading</button><button>Lighting</button><button>Show</button><button>Renderer</button><button>Panels</button></nav>
      <div class="panel-bar">
        <i class="sep"></i>
        <button aria-label="Camera"><svg><use href="#p-cam"/></svg></button><button aria-label="Camera attributes"><svg><use href="#p-cam2"/></svg></button><button aria-label="Bookmarks"><svg><use href="#p-book"/></svg></button><button aria-label="Image plane"><svg><use href="#p-img"/></svg></button><button aria-label="Pan and zoom"><svg><use href="#p-pan"/></svg></button><button aria-label="Grease pencil"><svg><use href="#p-pen"/></svg></button>
        <i class="sep"></i>
        <button class="on" aria-label="Grid"><svg><use href="#p-grid"/></svg></button><button aria-label="Film gate"><svg><use href="#p-film"/></svg></button><button aria-label="Resolution gate"><svg><use href="#p-ball"/></svg></button><button class="on" aria-label="Gate mask"><svg><use href="#p-gate"/></svg></button><button aria-label="Field chart"><svg><use href="#p-field"/></svg></button><button aria-label="Safe action"><svg><use href="#p-safe"/></svg></button><button aria-label="Safe title"><svg><use href="#p-text"/></svg></button>
        <i class="sep"></i>
        <button class="on" aria-label="Wireframe"><svg><use href="#p-wire"/></svg></button><button aria-label="Smooth shade"><svg><use href="#p-solid"/></svg></button><button aria-label="Wireframe on shaded"><svg><use href="#p-wos"/></svg></button><button aria-label="Textured"><svg><use href="#p-tex"/></svg></button><button aria-label="Use all lights"><svg><use href="#p-light"/></svg></button><button aria-label="Shadows"><svg><use href="#p-shad"/></svg></button><button aria-label="High quality"><svg><use href="#p-dark"/></svg></button>
        <i class="sep"></i>
        <button aria-label="Ambient occlusion"><svg><use href="#p-ao"/></svg></button><button aria-label="Motion blur"><svg><use href="#p-blur"/></svg></button><button aria-label="Anti-aliasing"><svg><use href="#p-aa"/></svg></button><button aria-label="Depth of field"><svg><use href="#p-dof"/></svg></button>
        <i class="sep"></i>
        <button aria-label="Isolate select"><svg><use href="#p-iso"/></svg></button>
        <i class="sep"></i>
        <button aria-label="X-ray"><svg><use href="#p-xray"/></svg></button><button aria-label="X-ray active"><svg><use href="#p-two"/></svg></button><button aria-label="X-ray joints"><svg><use href="#p-jnt"/></svg></button>
      </div>
      <div class="canvas">
        <svg class="scene" viewBox="47 200 2595 1412">
          <g id="grid-lines" shape-rendering="crispEdges"></g>
          <ellipse cx="2589" cy="280" rx="44" ry="24" fill="url(#shade)"/>
          <g class="cube">
            <path d="M2556 232 2589 220 2623 232 2589 246Z" fill="#b2bfd0"/>
            <path d="M2556 232 2589 246V290L2559 272Z" fill="#a9b4c2"/>
            <path d="M2623 232 2589 246V290L2620 272Z" fill="#a1abb8"/>
            <path d="M2556 232 2589 246 2623 232M2589 246V290M2556 232 2559 272 2589 290 2620 272 2623 232" fill="none" stroke="#75818e" stroke-dasharray="8 3"/>
            <text transform="translate(2560 257) skewY(26)">FRONT</text>
            <text transform="translate(2595 270) skewY(-26)">RIGHT</text>
            <text transform="translate(2580 230) rotate(14) skewX(-30)">TOP</text>
          </g>
          <g class="gizmo" fill="none" stroke-width="1" shape-rendering="crispEdges"><path d="M72.500 1586V1573" stroke="#0f0"/><path d="M72 1586 63 1591" stroke="#00f"/><path d="M72 1586 82 1591" stroke="#f00"/></g>
          <g class="axis"><text x="68" y="1571" fill="#00ff00">y</text><text x="58" y="1590" fill="#0000ff">z</text><text x="80" y="1590" fill="#ff0000">x</text></g>
          <text class="persp" x="1322" y="1603">persp</text>
        </svg>
      </div>
    </section>

    <aside class="chan">
      <div class="chan-title"><i class="hgrip"></i><h2>Channel Box / Layer Editor</h2><i class="hgrip"></i>
        <button aria-label="Float"><svg viewBox="0 0 14 14"><path d="M3 6H9V11H3ZM5 6V3H11V8H9"/></svg></button><button aria-label="Close panel"><svg viewBox="0 0 14 14"><path d="M3 3 11 11M11 3 3 11"/></svg></button></div>
      <div class="chan-icons"><button aria-label="Manipulators"><svg><use href="#m-manip"/></svg></button><button aria-label="Speed"><svg><use href="#m-clock"/></svg></button><button aria-label="Hyperbolic"><svg><use href="#m-arrow"/></svg></button></div>
      <nav class="menubar chan-menu"><button>Channels</button><button>Edit</button><button>Object</button><button>Show</button></nav>
      <div class="well"></div>
      <i class="hgrip split"></i>
      <div class="tabs layer-tabs"><button class="act">Display</button><button>Render</button><button>Anim</button></div>
      <div class="layers">
        <nav class="menubar layer-menu"><button>Layers</button><button>Options</button><button>Help</button></nav>
        <div class="layer-icons"><button aria-label="Move layer up"><svg><use href="#y-up"/></svg></button><button aria-label="Move layer down"><svg><use href="#y-dn"/></svg></button><button aria-label="New layer"><svg><use href="#y-new"/></svg></button><button aria-label="New layer from selected"><svg><use href="#y-obj"/></svg></button></div>
        <div class="layer-list">
          <div class="hscroll"><button aria-label="Scroll left"><svg viewBox="0 0 14 16"><path d="M9 4V12L5 8Z"/></svg></button><div class="thumb"><i></i></div><div class="track"></div><button aria-label="Scroll left"><svg viewBox="0 0 14 16"><path d="M9 4V12L5 8Z"/></svg></button><button aria-label="Scroll right"><svg viewBox="0 0 14 16"><path d="M5 4V12L9 8Z"/></svg></button></div>
        </div>
      </div>
    </aside>
  </main>

  <div class="timeline">
    <i class="grip"></i>
    <div class="ticks"><span class="now">1<b>1</b></span><span>2</span><span>3</span><span>4</span><span>5</span><span>6</span><span>7</span><span>8</span><span>9</span><span>10</span><span>11</span><span>12</span><span>13</span><span>14</span><span>15</span><span>16</span><span>17</span><span>18</span><span>19</span><span>20</span><span>21</span><span>22</span><span>23</span><span>24</span></div>
    <input class="num" aria-label="Current time" value="1.00">
    <div class="play">
      <button aria-label="Go to start"><svg viewBox="0 0 16 16"><path d="M0 1H3V15H0ZM9 3V13L4 8ZM16 3V13L10 8Z"/></svg></button><button aria-label="Step back frame"><svg viewBox="0 0 16 16"><path d="M0 1H3V15H0ZM15 2V14L5 8Z"/></svg></button><button aria-label="Step back key"><svg viewBox="0 0 16 16"><path d="M0 1H1V15H0ZM3 1H4V15H3ZM15 2V14L6 8Z"/><path class="red" d="M2 -2V18"/></svg></button><button aria-label="Play backwards"><svg viewBox="0 0 16 16"><path d="M15 1V15L2 8Z"/></svg></button><button aria-label="Play forwards"><svg viewBox="0 0 16 16"><path d="M1 1V15L14 8Z"/></svg></button><button aria-label="Step forward key"><svg viewBox="0 0 16 16"><path d="M1 2V14L10 8ZM12 1H13V15H12ZM15 1H16V15H15Z"/><path class="red" d="M14 -2V18"/></svg></button><button aria-label="Step forward frame"><svg viewBox="0 0 16 16"><path d="M1 2V14L10 8ZM12 1H15V15H12Z"/></svg></button><button aria-label="Go to end"><svg viewBox="0 0 16 16"><path d="M0 3V13L6 8ZM7 3V13L12 8ZM13 1H16V15H13Z"/></svg></button>
    </div>
  </div>

  <div class="range">
    <i class="grip"></i>
    <input class="num" aria-label="Animation start" value="1.00"><input class="num" aria-label="Range start" value="1.00">
    <div class="slider"><div class="bar"><i></i><span>1</span><span class="end">24</span><i></i></div></div>
    <input class="num" aria-label="Range end" value="24.00"><input class="num" aria-label="Animation end" value="48.00">
    <svg class="drop" viewBox="0 0 12 10"><path d="M1 1H11L6 7Z"/></svg><button class="field">No Anim Layer</button>
    <svg class="drop" viewBox="0 0 12 10"><path d="M1 1H11L6 7Z"/></svg><button class="field">No Character Set</button>
    <button class="mini" aria-label="Auto keyframe"><svg><use href="#b-key"/></svg></button><button class="mini" aria-label="Preferences"><svg><use href="#b-pref"/></svg></button>
  </div>

  <div class="command">
    <i class="grip"></i>
    <label for="mel">MEL</label><input id="mel" class="mel">
    <output class="result"></output>
    <button class="mini" aria-label="Script editor"><svg><use href="#b-win"/></svg></button>
  </div>

  <footer class="help"><i class="grip"></i><p>Select Tool: select an object</p></footer>

  <div class="taskbar">
    <button class="start" aria-label="Start"><svg viewBox="0 0 24 24"><path d="M0 3 10 2V11H0ZM11 1.500 24 0V11H11ZM0 12H10V22L0 21ZM11 12H24V24L11 22.500Z"/></svg></button>
    <input class="search" aria-label="Search" placeholder="Search the web and Windows">
    <button class="task view" aria-label="Task view"><svg viewBox="0 0 32 32" fill="none" stroke="#fff" stroke-width="1.300"><path d="M7 6.500H25V25.500H7ZM5 9.500H1.500V22.500H5M27 9.500H30.500V22.500H27"/></svg></button>
    <button class="task run" aria-label="File Explorer"><svg viewBox="0 0 32 32"><path d="M0 3H13V6H32V28H0Z" fill="#f7cf54"/><path d="M1 7H31V28H1Z" fill="#ffe596"/><path d="M3 4.500H8" stroke="#fff"/><path d="M5 30V19Q5 17 7 17H25Q27 17 27 19V30H21V22H11V30Z" fill="#1fc0f4"/></svg></button>
    <button class="task" aria-label="Store"><svg viewBox="0 0 32 36"><path d="M7 10C7 -2 15 -2 16 9M11 9C12 -1 19 -1 20 9" fill="none" stroke="#fff" stroke-width="1.800"/><path d="M0 10 32 8V33L26 36 0 31Z" fill="#fff"/><path d="M5 15 11 14V20H5ZM12 14 19 13V20H12ZM5 21H11V27L5 26ZM12 21H19V28L12 27Z" fill="#080808"/></svg></button>
    <button class="task run" aria-label="Chrome"><svg viewBox="0 0 32 32"><circle cx="16" cy="16" r="16" fill="#fcd20a"/><path d="M16 16 2.100 8A16 16 0 0 1 30 8.500H16Z" fill="#e2382b"/><path d="M16 16 2.100 8A16 16 0 0 0 14 32L20 20Z" fill="#4caf50"/><circle cx="16" cy="16" r="7.500" fill="#fff"/><circle cx="16" cy="16" r="6" fill="#2f79c8"/></svg></button>
    <button class="task media" aria-label="Media player"><svg viewBox="0 0 40 40"><path d="M2 3V35L25 20Z" fill="#fff" stroke="#2f9dfb" stroke-width="3" stroke-linejoin="round"/><rect x="17" y="18" width="22" height="22" fill="#d4dcf8" stroke="#8c8cd0" stroke-width="1.500"/><path d="M25 23 33 29 25 35Z" fill="#3f4bd8"/></svg></button>
    <button class="task multi" aria-label="Maya"><svg class="wide"><use href="#maya"/></svg></button>
    <div class="tray">
      <svg viewBox="0 0 24 24" fill="none" stroke="#fff" stroke-width="1.500"><path d="M3 16 12 8 21 16"/></svg>
      <svg viewBox="0 0 24 24" fill="none" stroke="#fff" stroke-width="1.300"><path d="M2 3V6M5 3V6M1 7H6V10Q3.500 13 1 10ZM3.500 12V18H21"/><path d="M8 6H21V17H8"/><path d="M7 8H19.500V15.500H5V11Z" fill="#fff"/><path d="M22.500 10V14"/></svg>
      <svg viewBox="0 0 24 24" fill="none" stroke="#fff" stroke-width="1.300"><path d="M3 22Q4 5 21 3M7 22Q8 9 21 8M11 22Q12 13 21 12M15 22Q15 17 21 16"/><path d="M18 20H21V22H18Z" fill="#fff"/></svg>
      <svg viewBox="0 0 24 24" fill="none" stroke="#fff" stroke-width="1.300"><path d="M1 8H5L10 3V21L5 16H1ZM13 9Q16 12 13 15M16 6Q21 12 16 18M19 4Q26 12 19 20"/></svg>
      <svg viewBox="0 0 24 26"><path d="M0 0H24V20H15L11 26 7 20H0Z" fill="#fff"/><path d="M5 6H19M5 10H19M5 14H14" stroke="#111" stroke-width="1.300"/></svg>
      <span>ENG</span>
      <time>8:21 AM<br>8/15/2015</time>
      <i class="peek"></i>
    </div>
  </div>
</div>
<script src="grid.js"></script>
</body>
</html>
```

FILE: grid.js
```js
// Ground plane of the persp camera: u and v run from -1 to 1 over 24 cells.
const NS = 'http://www.w3.org/2000/svg';
const CELLS = 24;
const group = document.getElementById('grid-lines');

function project(u, v) {
  const near = u + v;
  const side = u - v;
  const w = 1 - 0.1655 * near;
  return [1344.5 + 477.5 * side / w, (907 + 74.3 * near) / w];
}

function addLine(a, b, name) {
  const line = document.createElementNS(NS, 'line');
  line.setAttribute('x1', a[0]);
  line.setAttribute('y1', a[1]);
  line.setAttribute('x2', b[0]);
  line.setAttribute('y2', b[1]);
  line.setAttribute('class', name);
  group.appendChild(line);
}

for (let i = 0; i <= CELLS; i++) {
  const t = -1 + 2 * i / CELLS;
  addLine(project(t, -1), project(t, 1), 'line');
  addLine(project(-1, t), project(1, t), 'line');
}
addLine(project(0, -1), project(0, 1), 'main-line');
addLine(project(-1, 0), project(1, 0), 'main-line');
```

FILE: styles.css
```css
* { box-sizing: border-box; }
body { margin: 0; background: #444; color: #c8c8c8; font: 11px/14px Roboto, "Liberation Sans", sans-serif; }
button, input, select { font: inherit; color: inherit; margin: 0; padding: 0; border: 0; background: none; border-radius: 0; }
button { display: flex; align-items: center; justify-content: center; white-space: nowrap; }
h1, h2, p { margin: 0; font-weight: 400; }
svg { display: block; flex: none; }
.defs { position: absolute; width: 0; height: 0; }
.maya-word { font: bold 7px "Liberation Sans", sans-serif; fill: #fff; }

.app { display: flex; flex-direction: column; min-height: 100vh; }

/* title bar */
.title { height: 34px; background: #fff; display: flex; align-items: center; gap: 5px; padding-left: 2px; }
.logo24 { width: 24px; height: 24px; overflow: visible; }
.title h1 { font: 17px/24px "Open Sans", sans-serif; color: #999; }
.winbtns { margin-left: auto; margin-right: 2px; display: flex; }
.winbtns button { width: 70px; height: 32px; }
.winbtns svg { width: 16px; height: 16px; fill: none; stroke: #999; }

/* menus */
.menubar { display: grid; grid-auto-flow: column; justify-content: start; align-items: center; }
.menubar button { justify-content: start; }
.main-menu { height: 19px; padding: 2px 0 0 8px; border-bottom: 1px solid #2b2b2b; grid-template-columns: 31px 33px 47px 48px 50px 52px 47px 44px 40px 61px 43px 53px 40px 69px 54px 47px 84px 30px; }
.panel-menu { height: 19px; padding-left: 7px; grid-template-columns: 36px 53px 52px 41px 60px 40px; }
.chan-menu { height: 20px; padding: 2px 0 0 6px; grid-template-columns: 59px 33px 47px 30px; }
.layer-menu { height: 22px; padding-left: 7px; grid-template-columns: 47px 52px 30px; }

/* grips and separators */
.grip { width: 6px; align-self: stretch; margin: 2px 2px 2px 5px; flex: none; background: radial-gradient(circle at 2px 2px, #666 1px, transparent 1px) 0 0 / 3px 6px, radial-gradient(circle at 2px 2px, #2a2a2a 1px, transparent 1px) 0 3px / 3px 6px; opacity: .7; }
.hgrip { display: block; height: 6px; flex: none; background: radial-gradient(circle at 2px 2px, #666 1px, transparent 1px) 0 0 / 6px 3px, radial-gradient(circle at 2px 2px, #2a2a2a 1px, transparent 1px) 3px 0 / 6px 3px; opacity: .7; }
.sep { width: 11px; align-self: stretch; flex: none; position: relative; }
.sep::before { content: ""; position: absolute; left: 5px; top: 2px; bottom: 2px; width: 1px; background: #707070; box-shadow: -1px 0 #2d2d2d; }
.sep::after { content: ""; position: absolute; left: 4px; top: 50%; width: 3px; height: 8px; margin-top: -4px; border: 1px solid #888; background: #444; }
.sep.fold::after { border: 0; background: #999; width: 5px; clip-path: polygon(0 0, 100% 50%, 0 100%); left: 5px; }

/* status line */
.status { height: 33px; display: flex; align-items: center; border-bottom: 1px solid #2e2e2e; padding-right: 3px; }
.mode { width: 98px; height: 20px; margin: 0 0 6px; padding: 0 4px; border: 1px solid #2c2c2c; border-radius: 3px; appearance: none; background-image: linear-gradient(90deg, transparent 82px, #2c2c2c 82px 83px, transparent 83px), conic-gradient(from 315deg at 50% 100%, #ccc 90deg, transparent 0), linear-gradient(#646464, #555); background-size: 100% 100%, 8px 4px, 100% 100%; background-position: 0 0, 86px 7px, 0 0; background-repeat: no-repeat; }
.mode { background-image: linear-gradient(90deg, transparent 82px, #2c2c2c 82px 83px, transparent 83px), conic-gradient(from 315deg at 50% 100%, #ccc 90deg, transparent 0), linear-gradient(#646464, #555); }
.status .sep { height: 24px; align-self: center; }
.tb { width: 26px; height: 26px; border-radius: 3px; }
.tb svg { width: 24px; height: 24px; }
.tb.big svg { width: 26px; height: 26px; }
.tb.on { background: #5a5a5a; box-shadow: inset 0 0 0 1px #2b2b2b; }
.push { flex: 1; }

/* shelf */
.shelf { height: 72px; display: flex; border-bottom: 1px solid #2e2e2e; padding: 4px 3px 1px 0; }
.shelf-side { width: 22px; margin: 0 3px 0 1px; border: 1px solid #2b2b2b; display: flex; flex-direction: column; align-items: center; justify-content: end; gap: 4px; padding-bottom: 5px; }
.shelf-side b { width: 12px; height: 9px; background: #777; border-radius: 2px; }
.shelf-side hr { width: 20px; margin: 0; border: 0; border-top: 1px solid #bbb; }
.shelf-side svg { width: 12px; height: 8px; fill: #555; stroke: #999; }
.shelf-main { flex: 1; display: flex; flex-direction: column; }
.tabs { display: grid; grid-auto-flow: column; justify-content: start; align-items: end; }
.tabs button { height: 16px; border: 1px solid #2a2a2a; border-width: 1px 1px 0 0; background: linear-gradient(#4b4b4b, #3e3e3e); }
.tabs .act { height: 19px; background: #666; border-radius: 3px 3px 0 0; border-left-width: 1px; }
.shelf-tabs { height: 20px; grid-template-columns: 71px 70px 78px 79px 95px 83px 82px 85px 93px 59px 68px 63px 52px 61px 67px 70px 1fr; justify-content: stretch; }
.trash { width: 16px; height: 17px; justify-self: end; }
.shelf-box { height: 46px; border: 1px solid #666; box-shadow: inset 0 0 0 2px #444, inset 0 0 0 3px #2b2b2b, 0 0 0 1px #2b2b2b; border-radius: 3px; display: flex; align-items: center; padding-left: 3px; }
.shelf-box button { width: 35px; height: 40px; }
.shelf-box svg { width: 32px; height: 32px; }
.shelf-box .tall svg { width: 34px; height: 40px; }

/* work area */
.work { flex: 1; display: flex; }
.toolbox { width: 46px; flex: none; display: flex; flex-direction: column; padding: 6px 3px; border-right: 2px solid #333; }
.toolbox .hgrip { width: 36px; margin-bottom: 1px; }
.tools { display: flex; flex-direction: column; gap: 2px; border-left: 1px solid #2b2b2b; border-right: 1px solid #5c5c5c; padding: 1px 0 0 1px; }
.tools button, .tools span { width: 35px; height: 35px; }
.tools button { border: 1px solid #5c5c5c; border-radius: 2px; box-shadow: inset 0 0 0 1px #3a3a3a; }
.tools .on { background: #a0a0a0; }
.tools svg { width: 33px; height: 33px; }
.tools span { height: 33px; }
.layouts { flex: 1; display: flex; flex-direction: column; gap: 4px; border: 1px solid #2b2b2b; border-width: 0 0 0 1px; box-shadow: 1px 1px #5c5c5c; padding: 14px 0 0 1px; margin-right: 1px; }
.layouts button { width: 34px; height: 34px; background: #2b2b2b; border-radius: 2px; }
.layouts svg { width: 34px; height: 34px; }
.layouts .more { background: none; border: 1px solid #2b2b2b; border-width: 0 1px 1px 0; width: 32px; height: 32px; }
.more svg { width: 10px; height: 8px; fill: #555; stroke: #999; }
.logo32 { width: 32px; height: 32px; margin: 2px 0 0 3px; overflow: visible; }

.panel { flex: 1; min-width: 0; display: flex; flex-direction: column; border: 1px solid #888; margin: 2px 0 1px; }
.panel-bar { height: 20px; display: flex; align-items: center; padding-bottom: 1px; }
.panel-bar button { width: 20px; height: 19px; border-radius: 2px; }
.panel-bar svg { width: 18px; height: 18px; }
.panel-bar .on { background: #5c5c5c; box-shadow: inset 0 0 0 1px #2b2b2b; }
.canvas { flex: 1; position: relative; background: linear-gradient(#7f92a9, #667889 24%, #4b5661 50%, #30353d 76%, #1a1b1c); }
.scene { position: absolute; width: 100%; height: 100%; }
.line { stroke: #868382; }
.main-line { stroke: #000; stroke-width: 2; }
.cube text { font: bold 8px "Liberation Sans", sans-serif; fill: #66717d; }
.axis { font: bold 12px "Liberation Sans", sans-serif; }
.persp { font: bold 12px "Liberation Sans", sans-serif; fill: #074a1c; }

/* channel box */
.chan { width: 237px; flex: none; display: flex; flex-direction: column; padding: 4px 3px 2px 10px; }
.chan-title { height: 18px; display: flex; align-items: center; gap: 2px; }
.chan-title h2 { font: 11px/14px Roboto, sans-serif; flex: 1; text-align: center; white-space: nowrap; }
.chan-title .hgrip { width: 24px; }
.chan-title button { width: 15px; height: 15px; background: #2f2f2f; border: 1px solid #666; border-radius: 2px; }
.chan-title svg { width: 13px; height: 13px; fill: none; stroke: #bbb; stroke-width: 1.5; }
.chan-icons { height: 24px; display: flex; justify-content: end; align-items: center; gap: 5px; padding-right: 2px; }
.chan-icons svg { width: 16px; height: 16px; }
.well { flex: 1; background: #2a2a2a; border: 1px solid #666; outline: 1px solid #2b2b2b; box-shadow: inset 0 0 0 2px #2b2b2b, inset 0 0 0 3px #3a3a3a; }
.split { width: 74px; margin: 3px auto 4px; }
.layer-tabs { height: 20px; grid-template-columns: 68px 72px 57px; }
.layers { height: 394px; border: 1px solid #666; outline: 1px solid #2b2b2b; display: flex; flex-direction: column; padding: 0 3px 3px 2px; }
.layer-icons { height: 24px; display: flex; justify-content: end; gap: 6px; align-items: center; padding-right: 1px; }
.layer-icons svg { width: 20px; height: 18px; }
.layer-list { flex: 1; background: #2a2a2a; border: 1px solid #1f1f1f; box-shadow: inset 0 0 0 1px #3a3a3a; display: flex; flex-direction: column; justify-content: end; padding: 2px; border-radius: 2px; }
.hscroll { display: flex; height: 16px; gap: 1px; }
.hscroll button, .thumb { background: #646464; border: 1px solid #555; }
.hscroll button { width: 15px; }
.hscroll svg { width: 14px; height: 16px; fill: #ddd; }
.thumb { width: 98px; display: grid; place-items: center; }
.thumb i { width: 18px; height: 10px; background: radial-gradient(circle at 1px 1px, #222 1px, transparent 1px) 0 0 / 4px 4px; }
.track { flex: 1; background: repeating-conic-gradient(#2a2a2a 0 25%, #444 0 50%) 0 0 / 2px 2px; }

/* time slider */
.timeline { height: 37px; display: flex; align-items: center; border: 1px solid #333; border-width: 1px 0; }
.ticks { flex: 1; height: 30px; display: grid; grid-template-columns: repeat(24, 1fr); padding: 0 13px 0 14px; background: #2a2a2a; border-bottom: 1px solid #666; border-right: 1px solid #666; border-top: 1px solid #1d1d1d; color: #666; }
.ticks span { padding: 0 0 0 20px; line-height: 12px; display: flex; flex-direction: column; background: linear-gradient(#666, #666) 0 100% / 2px 15px no-repeat; }
.ticks .now { background-color: #222; }
.now b { color: #e8e8d0; font-weight: 400; padding-top: 3px; }
.num { width: 69px; height: 22px; padding: 0 5px; background: #2a2a2a; border: 1px solid #555; border-radius: 3px; margin-left: 2px; flex: none; }
.timeline .num { margin-left: 3px; }
.play { display: flex; width: 222px; padding-left: 1px; margin-right: 5px; }
.play button { flex: 1; }
.play svg { width: 17px; height: 16px; overflow: visible; fill: #ccc; stroke: #222; stroke-width: .6; }
.play .red { stroke: #c22; stroke-width: 1; }

/* range slider */
.range { height: 29px; display: flex; align-items: center; border-bottom: 1px solid #333; padding: 2px 4px 0 0; }
.slider { flex: 1; height: 22px; margin: 0 0 0 2px; padding: 3px 0 1px 13px; background: #232323; border-bottom: 1px solid #666; border-right: 1px solid #666; }
.bar { width: 49.300%; height: 18px; background: #646464; display: flex; align-items: center; gap: 4px; padding: 0 4px; }
.bar i { width: 11px; height: 12px; border: 1px solid #222; border-width: 0 1px 1px 0; }
.bar .end { margin-left: auto; }
.drop { width: 12px; height: 10px; margin: 0 4px; fill: #555; stroke: #999; }
.field { width: 103px; height: 22px; justify-content: start; padding: 0 3px; border: 1px solid #505050; border-radius: 3px; }
.mini { width: 16px; height: 16px; }
.mini svg { width: 16px; height: 16px; }
.range .mini { margin-left: 4px; }

/* command line */
.command { height: 33px; display: flex; align-items: center; border-bottom: 1px solid #333; padding-right: 4px; }
.command label { width: 46px; padding-left: 11px; }
.mel, .result { height: 25px; border: 1px solid #555; border-radius: 2px; background: #2a2a2a; flex: 1; }
.result { background: #000; border-color: #2a2a2a; margin: 0 1px 0 6px; }
.help { height: 27px; display: flex; align-items: center; padding: 0 3px 1px 0; }
.help p { flex: 1; height: 22px; line-height: 20px; padding-left: 12px; border: 1px solid #666; border-width: 1px 1px 1px 0; border-top-color: #2b2b2b; box-shadow: inset 1px 0 #2b2b2b; font-size: 10px; }

/* taskbar */
.taskbar { height: 60px; background: linear-gradient(90deg, #030303 25%, #1b1917 40%, #12110f 60%, #0f0f0f 80%, #0a0a0a); display: flex; color: #fff; font: 17px/26px "Open Sans", sans-serif; }
.start { width: 72px; }
.start svg { width: 24px; height: 24px; fill: #fff; }
.search { width: 516px; background: #333; padding: 2px 18px 0; font: 20px/26px "Open Sans", sans-serif; }
.search::placeholder { color: #999; opacity: 1; }
.task { width: 61px; margin-left: 14px; padding-top: 2px; }
.task svg { width: 32px; height: 32px; }
.task.view { margin: 0 2px 0 5px; }
.run { box-shadow: inset 0 -3px #6fb0e8; }
.multi { background: linear-gradient(90deg, #6fb0e8 47px, #5484ac 47px) 0 100% / 100% 3px no-repeat; }
.task .wide { width: 36px; height: 36px; overflow: visible; }
.media { background: linear-gradient(90deg, #2c5c28 16px, #2a2a2a 16px); box-shadow: inset 0 -3px #4ee838; }
.task.media svg { width: 40px; height: 40px; }
.tray { margin-left: auto; display: flex; align-items: center; gap: 12px; }
.tray svg { width: 24px; height: 26px; }
.tray time { text-align: center; margin-left: 14px; }
.peek { width: 1px; height: 60px; background: #666; margin-right: 7px; }
```
